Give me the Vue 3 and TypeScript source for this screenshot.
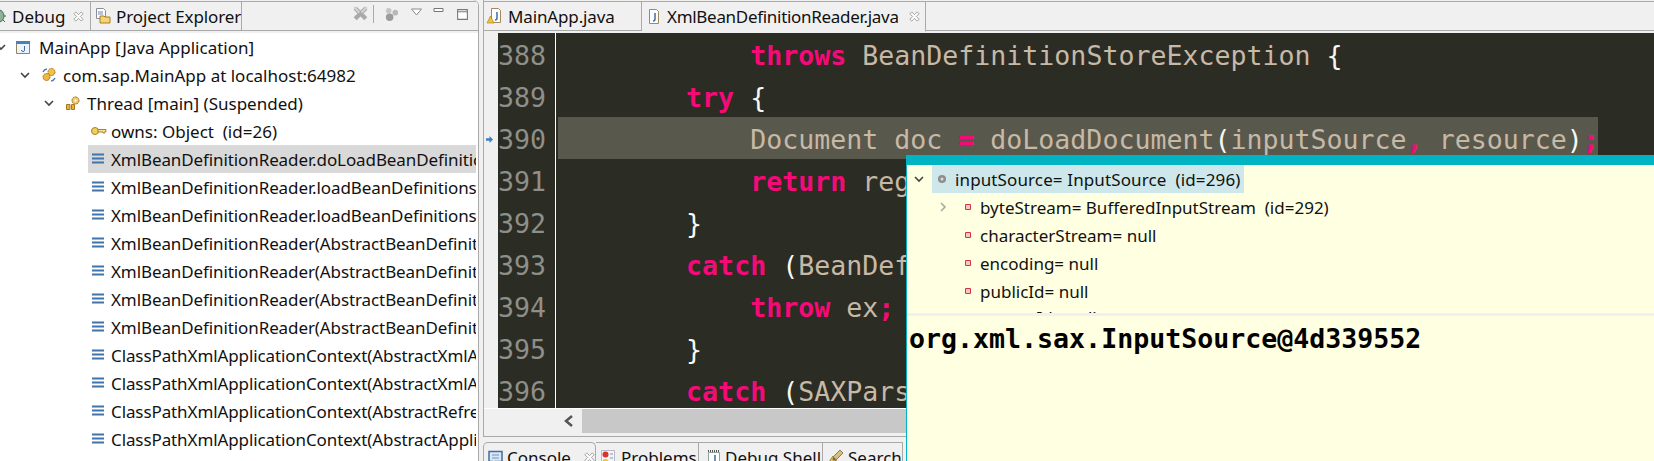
<script setup lang="ts">
const frames: string[] = [
  'XmlBeanDefinitionReader.doLoadBeanDefinitions(InputSource, Resource)',
  'XmlBeanDefinitionReader.loadBeanDefinitions(EncodedResource)',
  'XmlBeanDefinitionReader.loadBeanDefinitions(Resource)',
  'XmlBeanDefinitionReader(AbstractBeanDefinitionReader).loadBeanDefinitions',
  'XmlBeanDefinitionReader(AbstractBeanDefinitionReader).loadBeanDefinitions',
  'XmlBeanDefinitionReader(AbstractBeanDefinitionReader).loadBeanDefinitions',
  'XmlBeanDefinitionReader(AbstractBeanDefinitionReader).loadBeanDefinitions',
  'ClassPathXmlApplicationContext(AbstractXmlApplicationContext).loadBeans',
  'ClassPathXmlApplicationContext(AbstractXmlApplicationContext).loadBeans',
  'ClassPathXmlApplicationContext(AbstractRefreshableApplicationContext)',
  'ClassPathXmlApplicationContext(AbstractApplicationContext).obtainFresh',
  'ClassPathXmlApplicationContext(AbstractApplicationContext).refresh()',
]
type Seg = { t: string; c?: string }
const lines: { n: number; segs: Seg[]; cur?: boolean }[] = [
  { n: 388, segs: [{ t: '            ' }, { t: 'throws', c: 'k' }, { t: ' BeanDefinitionStoreException ' }, { t: '{', c: 'w' }] },
  { n: 389, segs: [{ t: '        ' }, { t: 'try', c: 'k' }, { t: ' ' }, { t: '{', c: 'w' }] },
  { n: 390, cur: true, segs: [{ t: '            Document doc ' }, { t: '=', c: 'k' }, { t: ' doLoadDocument' }, { t: '(', c: 'w' }, { t: 'inputSource' }, { t: ',', c: 'k' }, { t: ' resource' }, { t: ')', c: 'w' }, { t: ';', c: 'k' }] },
  { n: 391, segs: [{ t: '            ' }, { t: 'return', c: 'k' }, { t: ' registerBeanDefinitions' }, { t: '(', c: 'w' }, { t: 'doc' }, { t: ',', c: 'k' }, { t: ' resource' }, { t: ')', c: 'w' }, { t: ';', c: 'k' }] },
  { n: 392, segs: [{ t: '        ' }, { t: '}', c: 'w' }] },
  { n: 393, segs: [{ t: '        ' }, { t: 'catch', c: 'k' }, { t: ' ' }, { t: '(', c: 'w' }, { t: 'BeanDefinitionStoreException ex' }, { t: ')', c: 'w' }] },
  { n: 394, segs: [{ t: '            ' }, { t: 'throw', c: 'k' }, { t: ' ex' }, { t: ';', c: 'k' }] },
  { n: 395, segs: [{ t: '        ' }, { t: '}', c: 'w' }] },
  { n: 396, segs: [{ t: '        ' }, { t: 'catch', c: 'k' }, { t: ' ' }, { t: '(', c: 'w' }, { t: 'SAXParseException ex' }, { t: ')', c: 'w' }] },
]
const owns = 'owns: Object  (id=26)'
const inputLabel = 'inputSource= InputSource  (id=296)'
const fields: string[] = ['byteStream= BufferedInputStream  (id=292)', 'characterStream= null', 'encoding= null', 'publicId= null', 'systemId= null']
</script>

<template>
  <div class="root">
    <section class="left">
      <header class="tabbar">
        <div class="tab active debug">
          <svg class="ic16" viewBox="0 0 16 16"><path d="M9 2l3 3M15 8h-3M14 14l-3-3M3 1l2 3" stroke="#41694c" fill="none" /><ellipse cx="8" cy="8" rx="5" ry="6" fill="#8fb19a" stroke="#46705a" /><path d="M8 3v10" stroke="#2f5a44" /></svg>
          <span>Debug</span>
          <svg class="close" viewBox="0 0 12 12"><path d="M1 3l2-2 3 3 3-3 2 2-3 3 3 3-2 2-3-3-3 3-2-2 3-3z" fill="#fff" stroke="#9a9a9a" /></svg>
        </div>
        <div class="tab pe">
          <svg class="ic16" viewBox="0 0 16 16"><path d="M1.500 .5h7l2 2v8h-9z" fill="#fff" stroke="#8c8c9a" /><path d="M3 4h5M3 6h5" stroke="#6e85a8" /><path d="M5 8h4l1 1h5v6H5z" fill="#f5d56f" stroke="#a57f28" /></svg>
          <span>Project Explorer</span>
        </div>
        <div class="tools">
          <svg class="t1" viewBox="0 0 16 16"><path d="M3 3l10 10M13 3L3 13" stroke="#a9a9a9" stroke-width="4" /><path d="M2 2l5 5M14 2L9 7" stroke="#d4d4d4" stroke-width="2" /></svg>
          <i class="sep"></i>
          <svg class="t2" viewBox="0 0 16 16"><circle cx="5" cy="4" r="3" fill="#c6c6c6" /><circle cx="12" cy="6" r="3" fill="#b8b8b8" /><circle cx="6" cy="11" r="4" fill="#9c9c9c" /></svg>
          <svg class="t3" viewBox="0 0 12 8"><path d="M1 1h10L6 7z" fill="#fff" stroke="#8a8a8a" /></svg>
          <svg class="t4" viewBox="0 0 12 6"><path d="M1.500 1.500h9v3h-9z" fill="#fff" stroke="#777" /></svg>
          <svg class="t5" viewBox="0 0 12 12"><path d="M1.500 1.500h9v9h-9z" fill="#fff" stroke="#777" /><path d="M1.500 3.500h9" stroke="#777" /></svg>
        </div>
      </header>
      <div class="tree">
        <div class="row lv0">
          <svg class="chev" viewBox="0 0 10 10"><path d="M1 3l4 4 4-4" fill="none" stroke="#444" stroke-width="1.600" /></svg>
          <svg class="ic14" viewBox="0 0 16 16"><path d="M1.500 2.500h13v12h-13z" fill="#eef4fb" stroke="#8c8660" /><path d="M1 2h14v3H1z" fill="#4c80bd" /><path d="M9.500 7v4.500q0 1-1.500 1T6.500 11" fill="none" stroke="#3f6f9e" /></svg>
          <span>MainApp [Java Application]</span>
        </div>
        <div class="row lv1">
          <svg class="chev" viewBox="0 0 10 10"><path d="M1 3l4 4 4-4" fill="none" stroke="#444" stroke-width="1.600" /></svg>
          <svg class="ic16" viewBox="0 0 16 16"><circle cx="10.500" cy="5" r="3.500" fill="#f0c24a" stroke="#a87a1c" stroke-dasharray="2 .6" /><circle cx="5.500" cy="10" r="3.500" fill="#efb73e" stroke="#a87a1c" stroke-dasharray="2 .6" /><path d="M2 5a5 5 0 0 1 4-3M14 11a5 5 0 0 1-4 3" fill="none" stroke="#4f7fb8" stroke-width="1.500" /></svg>
          <span>com.sap.MainApp at localhost:64982</span>
        </div>
        <div class="row lv2">
          <svg class="chev" viewBox="0 0 10 10"><path d="M1 3l4 4 4-4" fill="none" stroke="#444" stroke-width="1.600" /></svg>
          <svg class="ic16" viewBox="0 0 16 16"><circle cx="10.500" cy="5.500" r="3.500" fill="#f3cf6b" stroke="#8c6420" stroke-dasharray="2 .6" /><circle cx="10.500" cy="5.500" r="1" fill="#fff" /><path d="M1.500 9.500h3.500v5H1.500zM6.500 9.500h3v5h-3z" fill="#e7b23c" stroke="#a87a1c" /></svg>
          <span>Thread [main] (Suspended)</span>
        </div>
        <div class="row lv3 own">
          <svg class="ic16" viewBox="0 0 16 10"><circle cx="4" cy="5" r="3.500" fill="#f1cf62" stroke="#a8841e" /><path d="M7 3.500h8v2h-1v1.500h-2v-1H7z" fill="#f5e199" stroke="#a8841e" /></svg>
          <span>{{ owns }}</span>
        </div>
        <div v-for="(f, i) in frames" :key="i" class="row lv3 fr" :class="{ sel: i === 0 }">
          <svg class="frame" viewBox="0 0 14 12"><path d="M1 1.500h12M1 5.500h12M1 9.500h12" stroke="#3f74ad" stroke-width="2" /></svg>
          <span>{{ f }}</span>
        </div>
      </div>
    </section>
    <div class="right">
      <section class="editor">
        <header class="tabbar etabs">
          <div class="tab main">
            <svg class="ic16" viewBox="0 0 16 16"><path d="M4.500 .5h7l2 2v12h-9z" fill="#fff" stroke="#a08a5a" /><path d="M10 4v6q0 2-2 2" fill="none" stroke="#3f6f9e" stroke-width="1.500" /><path d="M3.500 8l3.500 7H0z" fill="#f1c232" stroke="#a87a1c" stroke-width=".6" /></svg>
            <span>MainApp.java</span>
          </div>
          <div class="tab active xml">
            <svg class="ic16" viewBox="0 0 16 16"><path d="M3.500 .5h7l2 2v12h-9z" fill="#fff" stroke="#a08a5a" /><path d="M9 4v6q0 2-2 2" fill="none" stroke="#3f6f9e" stroke-width="1.500" /></svg>
            <span>XmlBeanDefinitionReader.java</span>
            <svg class="close" viewBox="0 0 12 12"><path d="M1 3l2-2 3 3 3-3 2 2-3 3 3 3-2 2-3-3-3 3-2-2 3-3z" fill="#fff" stroke="#9a9a9a" /></svg>
          </div>
          <div class="fill"></div>
        </header>
        <div class="body">
          <div class="ruler"><svg class="arrow" viewBox="0 0 8 8"><path d="M0 2.500h4V0l4 4-4 4V5.500H0z" fill="#3f7fbd" /></svg></div>
          <div class="gutter"><div v-for="l in lines" :key="l.n" class="ln">{{ l.n }}</div></div>
          <div class="code">
            <div v-for="l in lines" :key="l.n" class="cl" :class="{ cur: l.cur }"><span v-for="(s, j) in l.segs" :key="j" :class="s.c">{{ s.t }}</span></div>
          </div>
        </div>
        <div class="hscroll">
          <svg class="lt" viewBox="0 0 10 12"><path d="M8 1L2 6l6 5" fill="none" stroke="#555" stroke-width="2.500" /></svg>
          <div class="track"></div>
        </div>
      </section>
      <section class="bottom">
        <div class="tab active con">
          <svg class="ic16" viewBox="0 0 16 16"><path d="M1 1.500h13v10H7l-3 3v-3H1z" fill="#dbe7f4" stroke="#3f6f9e" stroke-width="1.500" /><path d="M4 5h7M4 8h7" stroke="#6e93bd" /></svg>
          <span>Console</span>
          <svg class="close" viewBox="0 0 12 12"><path d="M1 3l2-2 3 3 3-3 2 2-3 3 3 3-2 2-3-3-3 3-2-2 3-3z" fill="#fff" stroke="#9a9a9a" /></svg>
        </div>
        <div class="tab prob">
          <svg class="ic16" viewBox="0 0 16 16"><path d="M1.500 .5h13v15h-13z" fill="#f4f4f4" stroke="#b9b9c9" /><circle cx="5.500" cy="4.500" r="3" fill="#d9332b" /><circle cx="5.500" cy="12" r="3" fill="#eec03d" /><path d="M10 4h3M10 8h3M10 12h3" stroke="#7c93bd" /></svg>
          <span>Problems</span>
        </div>
        <div class="tab shell">
          <svg class="ic16" viewBox="0 0 16 16"><path d="M2.500 2.500h11v13h-11z" fill="#fff" stroke="#8fa39a" /><path d="M2 1h12" stroke="#555" stroke-dasharray="1 1" stroke-width="2" /><path d="M9 5v6q0 2-2 2" fill="none" stroke="#3f6f9e" stroke-width="1.500" /></svg>
          <span>Debug Shell</span>
        </div>
        <div class="tab search">
          <svg class="ic16" viewBox="0 0 16 16"><path d="M0 15l6-9 4 4z" fill="#e9c66c" stroke="#a9802a" /><path d="M6 7l7-7 3 3-7 7z" fill="#d8bd80" stroke="#8a7a5a" /><circle cx="7" cy="9" r="1.500" fill="#6b6b6b" /></svg>
          <span>Search</span>
        </div>
      </section>
    </div>
    <aside class="hover">
      <div class="band"></div>
      <div class="vars">
        <div class="vrow head">
          <svg class="chev" viewBox="0 0 10 10"><path d="M1 3l4 4 4-4" fill="none" stroke="#444" stroke-width="1.600" /></svg>
          <div class="hl">
            <svg class="dot" viewBox="0 0 10 10"><circle cx="5" cy="5" r="4" fill="#8e8e8e" /><circle cx="5" cy="5" r="1.500" fill="#ddd" /></svg>
            <span>{{ inputLabel }}</span>
          </div>
        </div>
        <div v-for="(f, i) in fields" :key="f" class="vrow child">
          <svg v-if="i === 0" class="chev r" viewBox="0 0 10 10"><path d="M3 1l4 4-4 4" fill="none" stroke="#a8a8a8" stroke-width="1.600" /></svg>
          <i v-else class="chev"></i>
          <svg class="sq" viewBox="0 0 6 6"><path d="M.5.500h5v5h-5z" fill="#f6c7c7" stroke="#d8324a" /></svg>
          <span>{{ f }}</span>
        </div>
      </div>
      <div class="detail">org.xml.sax.InputSource@4d339552</div>
    </aside>
  </div>
</template>

<style>
html, body { margin: 0; padding: 0; overflow: hidden; background: #fff; }
</style>

<style scoped>
.root {
  position: relative;
  width: 1654px;
  height: 461px;
  overflow: hidden;
  display: flex;
  background: #f0f0f0;
  font-family: "Noto Sans", sans-serif;
  font-size: 17px;
  color: #111;
}
.left { width: 479px; flex: none; background: #f0f0f0; display: flex; flex-direction: column; box-sizing: border-box; padding-top: 1px; overflow: hidden; border-right: 1px solid #a9a9a9; border-top-right-radius: 6px; }
.tabbar { height: 30px; flex: none; display: flex; background: #f0f0f0; position: relative; border-bottom: 1px solid #a9a9a9; border-top: 1px solid #a9a9a9; box-sizing: border-box; }
.tab { display: flex; align-items: center; gap: 5px; box-sizing: border-box; white-space: nowrap; border-right: 1px solid #a9a9a9; }
.ic16 { width: 16px; height: 16px; flex: none; overflow: visible; }
.ic14 { width: 16px; height: 16px; flex: none; }
.close { width: 11px; height: 11px; flex: none; margin-left: 9px; }
.debug { width: 100px; margin-left: -9px; flex: none; }
.debug .close { margin-left: 3px; }
.pe { width: 151px; padding-left: 4px; letter-spacing: -0.1px; flex: none; }
.tools { position: absolute; inset: 0 0 0 auto; width: 130px; }
.tools svg { position: absolute; }
.t1 { left: 4px; top: 3px; width: 17px; height: 17px; }
.sep { position: absolute; left: 25px; top: 3px; height: 18px; width: 1px; background: #a9a9a9; }
.t2 { left: 36px; top: 5px; width: 15px; height: 15px; }
.t3 { left: 62px; top: 6px; width: 13px; height: 8px; }
.t4 { left: 84px; top: 5px; width: 13px; height: 6px; }
.t5 { left: 108px; top: 6px; width: 13px; height: 13px; }
.tree { flex: 1; min-height: 0; overflow: hidden; background: #fff; border-top: 2px solid #f0f0f0; }
.row { height: 28px; display: flex; align-items: center; gap: 6px; white-space: pre; overflow: hidden; box-sizing: border-box; }
.chev { width: 10px; height: 10px; flex: none; }
.lv0 { margin-left: -4px; gap: 8.500px; }
.lv1 { padding-left: 20px; gap: 11px; }
.lv2 { padding-left: 44px; gap: 11px; }
.lv1 .ic16, .lv2 .ic16 { margin-right: -5px; }
.lv3 { margin-left: 88px; padding-left: 3px; margin-right: 2px; }
.own { gap: 4px; }
.fr span { letter-spacing: -0.1px; }
.sel { background: #d9d9d9; }
.frame { width: 14px; height: 12px; flex: none; }
.right { flex: 1; display: flex; flex-direction: column; min-width: 0; padding-left: 4px; }
.editor { height: 437px; flex: none; display: flex; flex-direction: column; border-left: 1px solid #a9a9a9; border-bottom: 1px solid #a9a9a9; box-sizing: border-box; padding-top: 1px; }
.etabs { height: 32px; border-bottom: none; }
.etabs .tab { border-bottom: 1px solid #a9a9a9; height: 29px; letter-spacing: -0.14px; }
.fill { flex: 1; height: 29px; border-bottom: 1px solid #a9a9a9; box-sizing: border-box; }
.main { width: 158px; padding-left: 3px; }
.etabs .xml { width: 284px; padding-left: 4px; border-bottom-color: transparent; height: 30px; letter-spacing: -0.3px; }
.xml .close { margin-left: 5px; }
.body { height: 375px; flex: none; display: flex; overflow: hidden; font-family: "DejaVu Sans Mono", monospace; font-size: 26.6px; font-weight: 400; background: #2b2c24; border-bottom: 1px solid #fff; box-sizing: content-box; }
.ruler { width: 14px; background: #f0f0f0; flex: none; position: relative; }
.arrow { position: absolute; left: 2px; top: 103px; width: 7px; height: 7px; }
.gutter { width: 57px; flex: none; border-right: 1px solid #fff; color: #8f8f8a; text-align: left; box-sizing: content-box; }
.ln, .cl { height: 42px; line-height: 38px; padding-top: 4px; box-sizing: border-box; white-space: pre; }
.code { flex: 1; color: #c8b8a6; padding-left: 2px; overflow: hidden; min-width: 0; }
.cur { background: #58584c; width: 1040px; }
.k { color: #f50a78; font-weight: 700; }
.w { color: #f8f8f2; }
.hscroll { height: 27px; flex: none; display: flex; align-items: center; padding-left: 80px; background: #f0f0f0; padding-bottom: 3px; box-sizing: border-box; }
.lt { width: 10px; height: 12px; flex: none; }
.track { flex: 1; height: 100%; background: #c8c8c8; margin-left: 8px; }
.bottom { display: flex; flex: 1; min-height: 0; padding-top: 5px; box-sizing: border-box; }
.bottom .tab { height: 30px; border-top: 1px solid #a9a9a9; flex: none; }
.con { width: 113px; padding-left: 4px; border-left: 1px solid #a9a9a9; gap: 3px; border-top-right-radius: 5px; border-top-left-radius: 5px; }
.con .close { margin-left: 10px; }
.prob { width: 103px; padding-left: 4px; }
.shell { width: 124px; padding-left: 7px; gap: 3px; }
.search { width: 80px; padding-left: 4px; }
.hover {
  position: absolute;
  left: 906px;
  top: 155px;
  width: 748px;
  height: 306px;
  background: #ffffe1;
  border-left: 1px solid #00b4c4;
  box-sizing: border-box;
  display: flex;
  flex-direction: column;
}
.band { height: 10px; background: #00b4c4; flex: none; margin-left: -1px; }
.vars { height: 151px; box-sizing: border-box; flex: none; overflow: hidden; border-bottom: 3px solid #f0f0f0; }
.vrow { height: 28px; display: flex; align-items: center; white-space: pre; }
.head .chev { margin-left: 7px; margin-right: 8px; }
.hl { background: #cde7ea; height: 28px; display: flex; align-items: center; gap: 8px; padding-left: 5px; padding-right: 4px; letter-spacing: 0.12px; }
.dot { width: 10px; height: 10px; }
.child { padding-left: 31px; }
.child:last-child { margin-top: -2px; }
.child .chev { margin-right: 17px; }
.sq { width: 6px; height: 6px; flex: none; margin-right: 9px; }
.detail { font-family: "DejaVu Sans Mono", monospace; font-weight: 700; font-size: 26.6px; color: #000; padding: 2px 0 0 2px; line-height: 42px; }
</style>
